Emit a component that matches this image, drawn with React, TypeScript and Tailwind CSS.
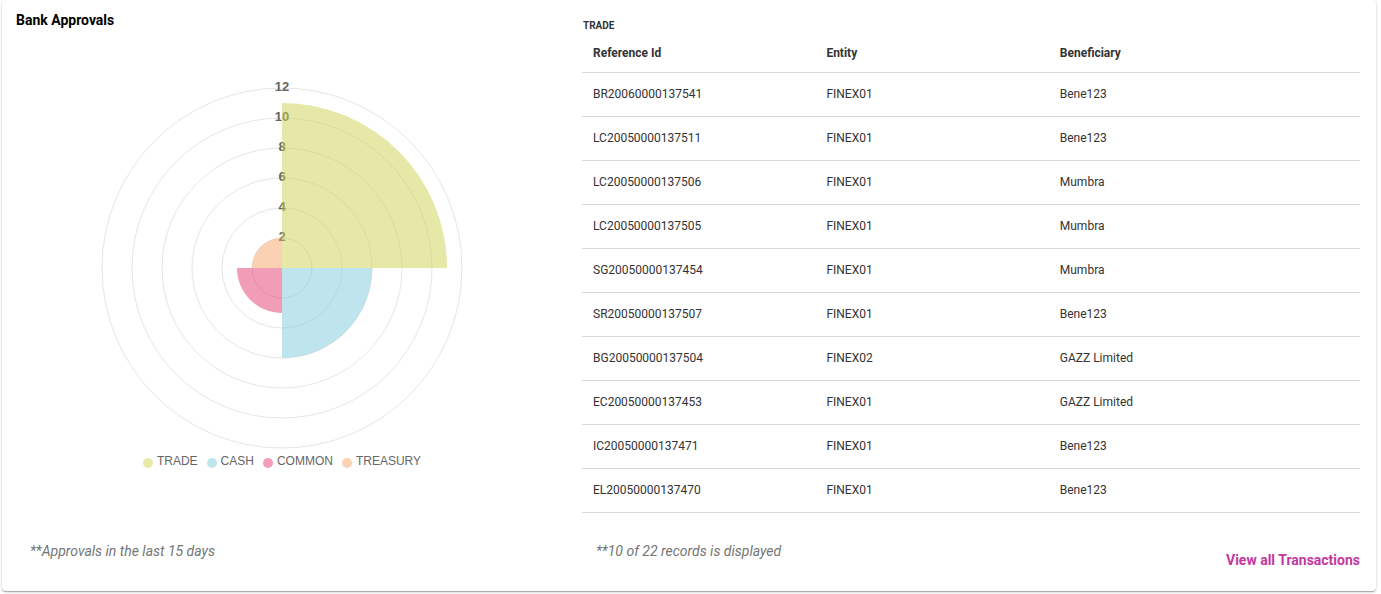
const rows = [
  { ref: "BR20060000137541", entity: "FINEX01", bene: "Bene123" },
  { ref: "LC20050000137511", entity: "FINEX01", bene: "Bene123" },
  { ref: "LC20050000137506", entity: "FINEX01", bene: "Mumbra" },
  { ref: "LC20050000137505", entity: "FINEX01", bene: "Mumbra" },
  { ref: "SG20050000137454", entity: "FINEX01", bene: "Mumbra" },
  { ref: "SR20050000137507", entity: "FINEX01", bene: "Bene123" },
  { ref: "BG20050000137504", entity: "FINEX02", bene: "GAZZ Limited" },
  { ref: "EC20050000137453", entity: "FINEX01", bene: "GAZZ Limited" },
  { ref: "IC20050000137471", entity: "FINEX01", bene: "Bene123" },
  { ref: "EL20050000137470", entity: "FINEX01", bene: "Bene123" },
]

const legend = [
  { label: "TRADE", color: "#e6e9a8" },
  { label: "CASH", color: "#bfe5ee" },
  { label: "COMMON", color: "#f29eb6" },
  { label: "TREASURY", color: "#fcd2b4" },
]

// polar area: 15px per unit, centre of the drawing at 182,182
const C = 182
const UNIT = 15

const PolarChart = () => {
  const r = (v: number) => v * UNIT
  const trade = r(11)
  const cash = r(6)
  const common = r(3)
  const treasury = r(2)
  return (
    <svg width="364" height="364" viewBox="0 0 364 364" className="overflow-visible">
      {[1, 2, 3, 4, 5, 6].map((i) => (
        <circle key={i} cx={C} cy={C} r={i * 30} fill="none" stroke="#e6e6e6" strokeWidth="1" />
      ))}
      {[2, 4, 6, 8, 10, 12].map((t) => (
        <text
          key={t}
          x={C}
          y={C - t * UNIT + 3}
          textAnchor="middle"
          fontFamily="'Liberation Sans', Arial, sans-serif"
          fontSize="13"
          fontWeight="bold"
          fill="#666"
        >
          {t}
        </text>
      ))}
      <g opacity="0.5">
        <path d={`M${C} ${C} L${C} ${C - trade} A${trade} ${trade} 0 0 1 ${C + trade} ${C} Z`} fill="#cdd351" />
        <path d={`M${C} ${C} L${C + cash} ${C} A${cash} ${cash} 0 0 1 ${C} ${C + cash} Z`} fill="#7fcbdd" />
        <path d={`M${C} ${C} L${C} ${C + common} A${common} ${common} 0 0 1 ${C - common} ${C} Z`} fill="#e53d6d" />
        <path d={`M${C} ${C} L${C - treasury} ${C} A${treasury} ${treasury} 0 0 1 ${C} ${C - treasury} Z`} fill="#f9a569" />
      </g>
    </svg>
  )
}

const App = () => {
  return (
    <div className="bg-white pl-[2px] pr-[5px] pb-[3px] font-['Roboto',sans-serif]">
      <div className="flex rounded-[4px] bg-white shadow-[0_1px_3px_rgba(0,0,0,0.2),0_1px_1px_rgba(0,0,0,0.14),0_2px_1px_-1px_rgba(0,0,0,0.12)]">
        {/* left: chart */}
        <div className="w-[560px] flex flex-col">
          <h2 className="pl-[14px] pt-[12px] text-[14px] leading-[16px] font-bold text-black">Bank Approvals</h2>
          <div className="mt-[58px] flex justify-center">
            <PolarChart />
          </div>
          <div className="mt-[4px] flex justify-center gap-[9px] font-['Liberation_Sans',Arial,sans-serif] text-[12px] leading-[14px] text-[#666]">
            {legend.map((l) => (
              <div key={l.label} className="flex items-center gap-[4px]">
                <span className="mt-[3px] size-[10px] rounded-full" style={{ backgroundColor: l.color }} />
                <span>{l.label}</span>
              </div>
            ))}
          </div>
          <p className="mt-[73px] pl-[28px] text-[14px] leading-[20px] italic text-[#757575]">
            **Approvals in the last 15 days
          </p>
        </div>

        {/* right: table */}
        <div className="ml-[20px] flex-1 pr-[16px] pb-[21px]">
          <p className="pt-[20px] pl-[1px] text-[10px] leading-[12px] font-bold text-[#333]">TRADE</p>
          <table className="w-full table-fixed border-collapse text-[12px] text-[#333]">
            <colgroup>
              <col className="w-[30%]" />
              <col className="w-[30%]" />
              <col className="w-[40%]" />
            </colgroup>
            <thead>
              <tr className="h-[40px] border-b border-[#d9d9d9]">
                <th className="px-[11px] pt-[2px] text-left font-bold">Reference Id</th>
                <th className="px-[11px] pt-[2px] text-left font-bold">Entity</th>
                <th className="px-[11px] pt-[2px] text-left font-bold">Beneficiary</th>
              </tr>
            </thead>
            <tbody>
              {rows.map((row) => (
                <tr key={row.ref} className="h-[44px] border-b border-[#d9d9d9]">
                  <td className="px-[11px]">{row.ref}</td>
                  <td className="px-[11px]">{row.entity}</td>
                  <td className="px-[11px]">{row.bene}</td>
                </tr>
              ))}
            </tbody>
          </table>
          <div className="mt-[28px] flex items-start justify-between">
            <p className="pl-[14px] text-[14px] leading-[20px] italic text-[#757575]">**10 of 22 records is displayed</p>
            <a className="mt-[9px] text-[14px] leading-[20px] font-bold text-[#c2389f] cursor-pointer">View all Transactions</a>
          </div>
        </div>
      </div>
    </div>
  )
}

export default App
